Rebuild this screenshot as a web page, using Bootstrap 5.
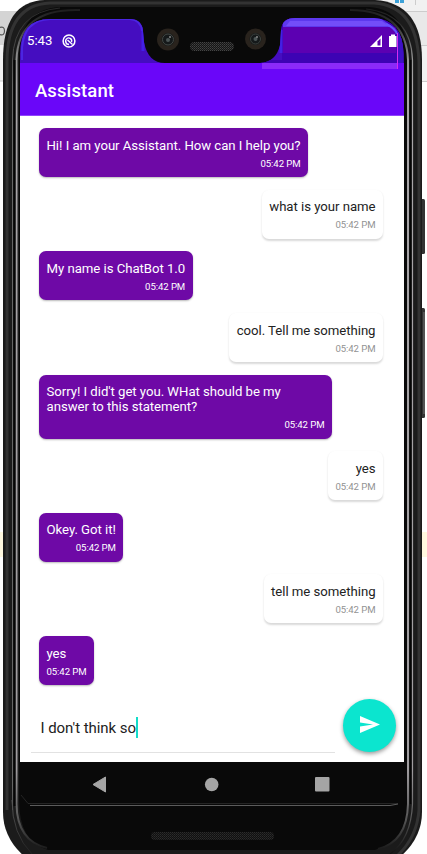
<!DOCTYPE html>
<html lang="en">
<head>
<meta charset="utf-8">
<meta name="viewport" content="width=device-width, initial-scale=1">
<title>Assistant</title>
<link href="https://cdn.jsdelivr.net/npm/bootstrap@5.3.0/dist/css/bootstrap.min.css" rel="stylesheet">
<style>
body{font-family:Roboto,"Liberation Sans",sans-serif;background:#fff;color:#222}
.stage{width:427px;height:854px}
.shell{left:0;top:0}
.screen{padding:18px 23px 0 20px;height:854px}
.statusbar{height:45px;padding:0 7px 0 7px;color:#fff}
.clock{font-size:13.2px;line-height:46px;padding-top:1px}
.appbar{height:53px;background:linear-gradient(#d92bf0,#d92bf0) 377px 0/1px 6px no-repeat,linear-gradient(#8b2af8,#8b2af8) 242px 0/136px 6px no-repeat #6a06f9;border-bottom:1px solid #8f45fb;color:#fff;padding:3px 0 0 15px}
.title{font-size:18.5px;font-weight:500;line-height:54px;letter-spacing:.1px}
.pane{height:646px;background:#fff}
.chat{padding:12.3px 21px 0 19px;gap:12.6px;height:570px}
.bubble{border-radius:7px;padding:9.5px 7.5px 0;height:49px;font-size:13.2px;line-height:16px;letter-spacing:-.04px;box-shadow:0 1px 2px rgba(0,0,0,.28)}
.bot{background:#6e09a6;color:#fff}
.me{background:#fff;box-shadow:0 1.5px 2px rgba(0,0,0,.15)}
.long{width:293px;height:64px;line-height:15px}
.stamp{font-size:9.6px;line-height:12px;margin-top:4px;letter-spacing:-.08px}
.long .stamp{margin-top:5px}
.me .stamp{color:#929292}
.composer{padding:12.5px 8px 0 11px;gap:8px}
.field{width:304px;height:54px;padding-left:9.5px;font-size:15px;border-bottom:1px solid #e2e2e2;line-height:58px;letter-spacing:-.05px}
.caret{width:2px;height:21px;background:#13dcc9;margin-top:18px}
.send{width:53px;height:53px;background:#0be5cf;border-radius:50%;box-shadow:0 2px 4px rgba(0,0,0,.4)}
.keys{height:44px}
</style>
</head>
<body>
<main class="stage position-relative overflow-hidden">
<svg class="shell position-absolute" width="427" height="854" viewBox="0 0 427 854" aria-hidden="true">
<defs>
<pattern id="mesh" width="2" height="2" patternUnits="userSpaceOnUse"><rect width="2" height="2" fill="#151515"/><rect width="1" height="1" fill="#444"/><rect x="1" y="1" width="1" height="1" fill="#333"/></pattern>
<linearGradient id="metal" gradientUnits="userSpaceOnUse" x1="0" y1="0" x2="0" y2="854"><stop offset="0" stop-color="#111"/><stop offset=".03" stop-color="#333"/><stop offset=".07" stop-color="#999"/><stop offset=".1" stop-color="#a9a6a9"/><stop offset=".9" stop-color="#a09da0"/><stop offset=".96" stop-color="#555"/><stop offset="1" stop-color="#111"/></linearGradient>
<linearGradient id="rim" gradientUnits="userSpaceOnUse" x1="0" y1="0" x2="0" y2="854"><stop offset="0" stop-color="#222"/><stop offset=".1" stop-color="#666"/><stop offset=".92" stop-color="#666"/><stop offset="1" stop-color="#222"/></linearGradient>
<clipPath id="glass"><path d="M20 70V54Q20 19 50 19H130Q142 19 143 31L144 42Q148 63 165 63H260Q276 62 280 45L281 30Q282 18 295 18H374Q403 20 403.500 54V70Z"/></clipPath>
</defs>
<path d="M0 11H30V45H0Z" fill="#d4d4d4"/><path d="M0 45H20V81H0Z" fill="#f2f2f2"/><path d="M0 81H20" stroke="#ccc"/>
<path d="M0 27.500Q4.500 26 4.500 31T0 34.500" fill="none" stroke="#555" stroke-width="1.200"/>
<path d="M380 0H427V81H380Z" fill="#f1f1f1"/><path d="M380 12H427V45H380Z" fill="#e9e9e9"/><path d="M380 11.500H427M415.500 0V5M415 45.500H427M415 81.500H427" stroke="#ccc"/>
<path d="M395 0h4v3h-4zM400 0h4v3h-4z" fill="#3da2d8"/>
<path d="M0 532H5V557H0ZM420 532H427V557H420Z" fill="#fff8df"/>
<rect x="418" y="199" width="7" height="55" rx="1.500" fill="#333"/><rect x="418" y="308" width="7" height="110" rx="1.500" fill="#333"/>
<path d="M424 312V414" stroke="#777"/>
<path d="M3 60Q3 1 45 0H375Q422 3 422 60V812Q422 838 400 857H25Q3 838 3 812Z" fill="#1b1b1b"/>
<path d="M7 810V62Q7 5 50 3H374Q417 6 419 62V810Q417 838 396 857" fill="none" stroke="#333" stroke-width="3"/>
<path d="M19 800Q19 842 48 850H375Q408 840 408 800V58Q407 9 369 7H60Q19 9 19 58Z" fill="#090909"/>
<path d="M12.500 810V60Q14 12 60 8M12 800Q12 834 32 854" fill="none" stroke="url(#rim)"/>
<path d="M80 10Q18 8 16.500 60V804Q17 841 47 848" fill="none" stroke="url(#metal)" stroke-width="2"/>
<path d="M14.500 60V806" stroke="#050505" stroke-width="2"/>
<path d="M350 10Q406 10 408 60V804Q407 842 378 849" fill="none" stroke="url(#metal)" stroke-width="2"/>
<path d="M366 9Q411 14 412.500 60V804Q411 839 390 854" fill="none" stroke="url(#metal)" stroke-width="1.200"/>
<path d="M410.500 60V804" stroke="#050505" stroke-width="1.500"/>
<g clip-path="url(#glass)">
<path d="M20 18H404V70H20Z" fill="#450dc0"/>
<path d="M282 18H404V63H260V60H282Z" fill="#3d03b4"/>
<path d="M283 27H396V53H283Z" fill="#5c00b2"/>
<path d="M283 18H380L393 27H283Z" fill="#5d38ee"/><path d="M290 21H382L389 26H286Z" fill="#734df9"/>
<path d="M398 22H404V63H398Z" fill="#3d10c5"/>
<path d="M143 20V51M281 30V53" stroke="#4320e5" stroke-width="3"/>
<path d="M22 60V48Q24 20 50 19H130Q141 20 142 31" fill="none" stroke="#4b25e2" stroke-width="2"/>
<path d="M386 24Q395 28 397 34" fill="none" stroke="#6650ff" stroke-width="2"/>
<path d="M397.500 33V63" stroke="#d92bf0"/>
</g>
<circle cx="168" cy="39.500" r="11" fill="#29231d"/><circle cx="168" cy="39.500" r="6.500" fill="#15191a"/><circle cx="168" cy="39.500" r="5.500" fill="none" stroke="#444844"/><circle cx="168" cy="40" r="2" fill="#4c5555"/><circle cx="170" cy="37" r="1" fill="#888"/>
<circle cx="255.500" cy="39" r="10.500" fill="#29231d"/><circle cx="255.500" cy="39" r="6" fill="#15191a"/><circle cx="255.500" cy="39" r="5" fill="none" stroke="#3c403c"/><circle cx="255.500" cy="39" r="2" fill="#4c5555"/><circle cx="257" cy="37" r="1" fill="#888"/>
<rect x="190" y="42" width="44" height="9" rx="4.500" fill="url(#mesh)"/>
<rect x="151" y="832" width="123" height="8" rx="4" fill="url(#mesh)" opacity=".6"/>
<path d="M21 795L28 803.500H398" fill="none" stroke="#242424"/><path d="M30 805.500H390L398 804" fill="none" stroke="#5c5c5c"/>
</svg>
<div class="screen position-relative d-flex flex-column">
<header>
<div class="statusbar d-flex align-items-center">
<span class="clock">5:43</span>
<svg class="ms-2" width="18" height="16" viewBox="0 0 18 16" fill="none" stroke="#fff" aria-hidden="true"><circle cx="9" cy="8" r="5.900" stroke-width="1.500"/><path d="M6.500 10A3 3 0 1 1 11.500 9M7.500 7L12.500 11.500M5.500 10.500L9 11.500" stroke-width="1.400"/></svg>
<svg class="ms-auto" width="28" height="16" viewBox="0 0 28 16" aria-hidden="true"><path d="M1 14H13V2Z" fill="#fff"/><path d="M8.500 12.500V8.500L11.500 5.500V12.500Z" fill="#5c00b2"/><path d="M20 4V3h2V1.500h4V3h1.500V14H20Z" fill="#fff"/></svg>
</div>
<div class="appbar d-flex align-items-center"><h1 class="title m-0">Assistant</h1></div>
</header>
<section class="pane">
<div class="chat d-flex flex-column align-items-start">
<div class="bubble bot">Hi! I am your Assistant. How can I help you?<div class="stamp text-end">05:42 PM</div></div>
<div class="bubble me align-self-end text-end">what is your name<div class="stamp">05:42 PM</div></div>
<div class="bubble bot">My name is ChatBot 1.0<div class="stamp text-end">05:42 PM</div></div>
<div class="bubble me align-self-end text-end">cool. Tell me something<div class="stamp">05:42 PM</div></div>
<div class="bubble bot long">Sorry! I did't get you. WHat should be my<br>answer to this statement?<div class="stamp text-end">05:42 PM</div></div>
<div class="bubble me align-self-end text-end">yes<div class="stamp">05:42 PM</div></div>
<div class="bubble bot">Okey. Got it!<div class="stamp text-end">05:42 PM</div></div>
<div class="bubble me align-self-end text-end">tell me something<div class="stamp">05:42 PM</div></div>
<div class="bubble bot">yes<div class="stamp text-end">05:42 PM</div></div>
</div>
<div class="composer d-flex">
<div class="field d-flex"><span>I don't think so</span><span class="caret"></span></div>
<button class="send btn border-0 p-0 d-flex align-items-center justify-content-center" aria-label="Send"><svg width="22" height="20" viewBox="0 0 22 20"><path d="M1 1L21 9.500L1 18V11.500L14 9.500L1 7.500Z" fill="#fff"/></svg></button>
</div>
</section>
<nav class="keys d-flex" aria-label="System navigation">
<svg width="384" height="44" viewBox="0 0 384 44" fill="#a5a5a5"><path d="M73 22.500L85.500 15V30Z" stroke="#a5a5a5" stroke-linejoin="round"/><circle cx="191.700" cy="22.500" r="6.800"/><rect x="295" y="15" width="14.500" height="14.500" rx="1"/></svg>
</nav>
</div>
</main>
<script src="https://cdn.jsdelivr.net/npm/bootstrap@5.3.0/dist/js/bootstrap.bundle.min.js"></script>
</body>
</html>
